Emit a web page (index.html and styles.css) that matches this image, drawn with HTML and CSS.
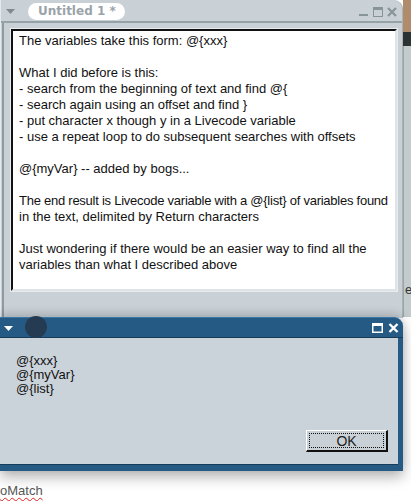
FILE: index.html
```html
<!DOCTYPE html>
<html lang="en">
<head>
  <meta charset="UTF-8">
  <title>Untitled 1</title>
  <link rel="stylesheet" href="styles.css">
</head>
<body>
  <div class="desktop">
    <div class="behind">
      <div class="behind-top"></div>
      <div class="behind-dark"></div>
      <div class="behind-body"><span class="behind-text">e</span></div>
    </div>

    <!-- stack window -->
    <div class="window stack">
      <div class="titlebar">
        <svg class="menu-arrow" width="9" height="6" viewBox="0 0 9 6"><path d="M0 0 H9 L4.5 5 Z" fill="#7e8a90"/></svg>
        <div class="tab">Untitled 1 *</div>
        <div class="controls">
          <svg width="10" height="10" viewBox="0 0 10 10"><rect x="0" y="7" width="9" height="2" fill="#87949a"/></svg>
          <svg width="10" height="10" viewBox="0 0 10 10"><rect x="0.5" y="0.5" width="9" height="9" fill="none" stroke="#87949a"/><rect x="0" y="0" width="10" height="3" fill="#87949a"/></svg>
          <svg width="10" height="10" viewBox="0 0 10 10"><path d="M1 1 L9 9 M9 1 L1 9" stroke="#87949a" stroke-width="2.2"/></svg>
        </div>
      </div>
      <div class="stack-body">
        <div class="field">The variables take this form: @{xxx}

What I did before is this:
- search from the beginning of text and find @{
- search again using an offset and find }
- put character x though y in a Livecode variable
- use a repeat loop to do subsequent searches with offsets

@{myVar} -- added by bogs...

<span class="snug">The end result is Livecode variable with a @{list} of variables found</span>
in the text, delimited by Return characters

Just wondering if there would be an easier way to find all the
variables than what I described above</div>
      </div>
    </div>

    <!-- answer dialog -->
    <div class="window dialog">
      <div class="titlebar blue">
        <svg class="menu-arrow" width="9" height="6" viewBox="0 0 9 6"><path d="M0 0 H9 L4.5 5 Z" fill="#ffffff"/></svg>
        <div class="controls">
          <svg width="11" height="10" viewBox="0 0 11 10"><rect x="0.75" y="0.75" width="9.5" height="8.5" fill="none" stroke="#fff" stroke-width="1.5"/><rect x="0" y="0" width="11" height="3" fill="#fff"/></svg>
          <svg width="11" height="10" viewBox="0 0 11 10"><path d="M1.5 1 L9.5 9 M9.5 1 L1.5 9" stroke="#fff" stroke-width="2.4"/></svg>
        </div>
      </div>
      <div class="dialog-body">
        <div class="answer">@{xxx}<br>@{myVar}<br>@{list}</div>
        <div class="buttons">
          <button class="ok"><span class="ok-focus">OK</span></button>
        </div>
      </div>
    </div>
    <div class="cursor-dot"></div>

    <div class="under-text">oMatch</div>
  </div>
</body>
</html>
```

FILE: styles.css
```css
body {
  margin: 0;
  background: #ffffff;
  font-family: "Liberation Sans", Arial, sans-serif;
}
.desktop {
  position: relative;
  width: 411px;
  height: 501px;
  overflow: hidden;
}

/* window peeking out on the right */
.behind {
  position: absolute;
  left: 403px;
  top: 0;
  width: 8px;
  height: 317px;
  display: flex;
  flex-direction: column;
}
.behind-top {
  height: 32px;
  background: #b08b6c;
}
.behind-dark {
  height: 14px;
  background: #2c3333;
}
.behind-body {
  flex: 1;
  background: #c3cbcc;
  border-left: 1px solid #9aa4a6;
  position: relative;
}
.behind-text {
  position: absolute;
  left: 1px;
  top: 236px;
  font-size: 13px;
  color: #333;
}

.window {
  position: absolute;
  left: 0;
  width: 403px;
  display: flex;
  flex-direction: column;
  box-sizing: border-box;
}

/* stack window */
.stack {
  top: 0;
  height: 318px;
  background: #c9d1d6;
  border-radius: 0 9px 0 0;
  border-left: 1px solid #e4e9ec;
  border-right: 1px solid #a9b3b8;
}
.titlebar {
  height: 21px;
  flex: none;
  display: flex;
  align-items: center;
  border-bottom: 2px solid #95a2a8;
  position: relative;
}
.menu-arrow {
  margin-left: 5px;
  margin-top: 3px;
}
.tab {
  margin-left: 13px;
  height: 17px;
  padding: 0 9px 0 10px;
  background: #ffffff;
  border-radius: 9px;
  font-family: "DejaVu Sans", sans-serif;
  font-weight: bold;
  font-size: 12px;
  line-height: 17px;
  color: #9aa3a9;
  margin-top: 1px;
}
.controls {
  margin-left: auto;
  margin-right: 5px;
  display: flex;
  gap: 4px;
  margin-top: 3px;
}
.stack-body {
  flex: 1;
  padding: 6px 5px 0 7px;
  border-left: 2px solid #8f9ba1;
  margin-left: 1px;
}
.field {
  height: 262px;
  box-sizing: border-box;
  background: #ffffff;
  border-top: 2px solid #111;
  border-left: 2px solid #111;
  border-right: 2px solid #dde3e6;
  border-bottom: 2px solid #dde3e6;
  outline: 1px solid #e8ecee;
  padding: 2px 1px 0 6px;
  font-size: 13px;
  line-height: 16px;
  color: #111;
  white-space: pre;
  overflow: hidden;
}
.snug {
  letter-spacing: -0.25px;
}

/* answer dialog */
.dialog {
  top: 317px;
  height: 154px;
  background: #245a83;
  border-radius: 0 9px 0 0;
  box-shadow: 0 6px 14px rgba(0, 0, 0, 0.3), 0 -4px 10px rgba(0, 0, 0, 0.12);
  border-top: 1px solid #3a78a8;
}
.titlebar.blue {
  height: 19px;
  border-bottom: 1px solid #173c58;
}
.titlebar.blue .menu-arrow {
  margin-left: 4px;
}
.titlebar.blue .controls {
  margin-right: 4px;
  gap: 5px;
  margin-top: 1px;
}
.dialog-body {
  flex: 1;
  background: #cbd3da;
  margin: 0 5px 6px 0;
  display: flex;
  flex-direction: column;
  padding: 16px 0 0 16px;
  border-bottom: 1px solid #173c58;
}
.answer {
  font-size: 13px;
  line-height: 14px;
  color: #111;
}
.buttons {
  margin-top: auto;
  display: flex;
  justify-content: flex-end;
  padding: 0 10px 12px 0;
}
.ok {
  width: 82px;
  height: 22px;
  padding: 2px;
  background: #c9d0d6;
  border-top: 1px solid #ffffff;
  border-left: 1px solid #ffffff;
  border-right: 2px solid #111;
  border-bottom: 2px solid #111;
  font-family: "Liberation Sans", Arial, sans-serif;
  font-size: 14px;
  color: #222;
  display: flex;
}
.ok-focus {
  flex: 1;
  border: 1px dotted #111;
  line-height: 14px;
}

.cursor-dot {
  position: absolute;
  left: 25px;
  top: 316px;
  width: 22px;
  height: 22px;
  border-radius: 50%;
  background: #253b52;
}

.under-text {
  position: absolute;
  left: 0;
  top: 483px;
  font-size: 13px;
  color: #555;
  text-decoration: underline wavy #e02020;
  text-decoration-thickness: 1px;
  text-underline-offset: 2px;
}
```
